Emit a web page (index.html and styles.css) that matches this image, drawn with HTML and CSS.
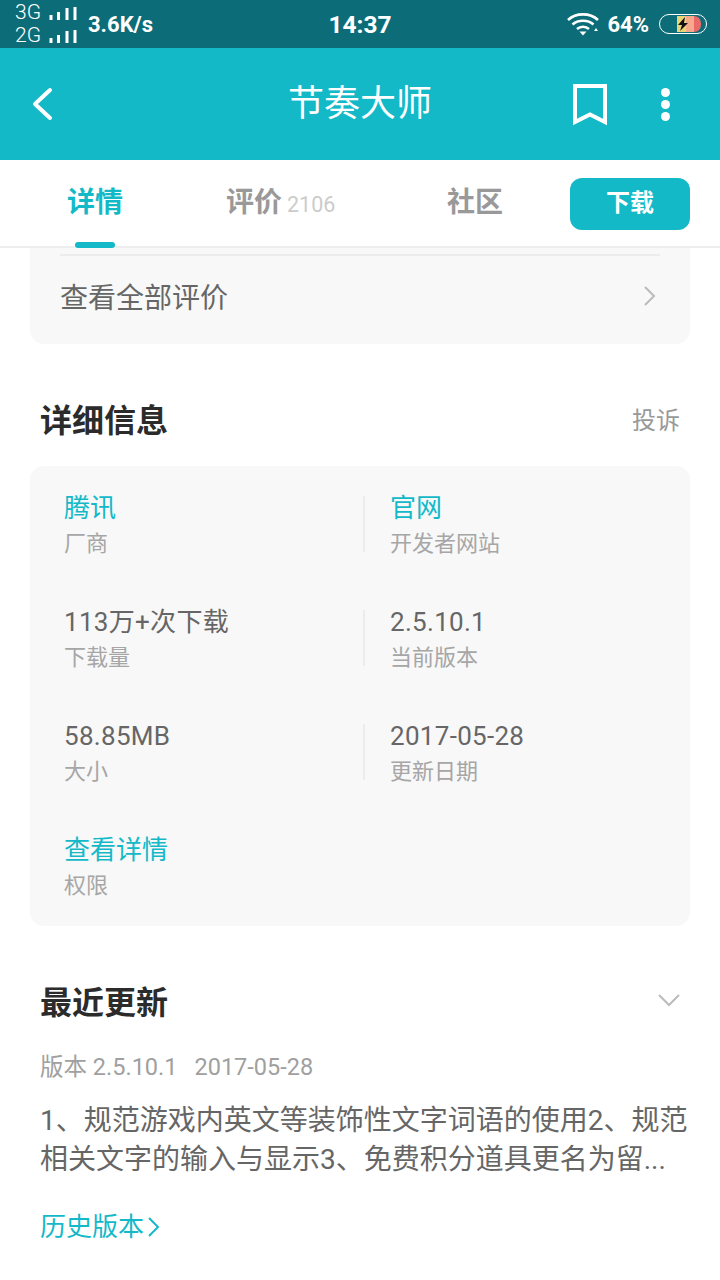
FILE: index.html
```html
<!DOCTYPE html>
<html lang="zh-CN">
  <head>
    <meta charset="utf-8">
    <meta name="viewport" content="width=device-width">
    <title>节奏大师</title>
    <link rel="stylesheet" href="styles.css">
  </head>

  <body>
    <div class="status">
      <div class="signals">
        <div class="signal">3G<svg width="28" height="14" viewBox="0 0 28 14"><path d="M2 9v5M9.500 6v8M18 2v12M26 1v13" stroke="#fff" stroke-width="3"/></svg></div>
        <div class="signal">2G<svg width="28" height="14" viewBox="0 0 28 14"><path d="M2 9v5M9.500 6v8M18 2v12M26 1v13" stroke="#fff" stroke-width="3"/></svg></div>
      </div>
      <span class="speed">3.6K/s</span>
      <span class="clock">14:37</span>
      <div class="status-right">
        <svg width="34" height="24" viewBox="0 0 34 24" fill="none" stroke="#fff" stroke-width="2.6">
          <path d="M1 8C9 .5 23 .5 31 8"/>
          <path d="M5.500 12.500C11 7.500 21 7.500 26.500 12.500"/>
          <path d="M10 17C13.500 14 18.500 14 22 17"/>
          <path d="M12.500 19.500h7L16 23.500z" fill="#fff" stroke="none"/>
          <path d="M27 19h4l-2-3z" fill="#fff" stroke="none"/>
        </svg>
        <span class="percent">64%</span>
        <div class="battery">
          <div class="battery-fill"></div>
          <svg class="bolt" width="12" height="14" viewBox="0 0 12 14"><path d="M8 0L1 8h4L3 14l8-8H7z" fill="#111"/></svg>
        </div>
      </div>
    </div>

    <div class="titlebar">
      <svg class="back" width="24" height="36" viewBox="0 0 24 36" fill="none"><path d="M19 4L4 18l15 14" stroke="#fff" stroke-width="4" stroke-linecap="round" stroke-linejoin="round"/></svg>
      <h1>节奏大师</h1>
      <svg class="bookmark" width="38" height="44" viewBox="0 0 38 44" fill="none"><path d="M3 3h30v36l-15-7.500L3 39z" stroke="#fff" stroke-width="4"/></svg>
      <div class="more"><i></i><i></i><i></i></div>
    </div>

    <div class="tabs">
      <div class="tab tab-on">详情</div>
      <div class="tab tab-review">评价 <span class="count">2106</span></div>
      <div class="tab tab-community">社区</div>
      <div class="download">下载</div>
    </div>

    <div class="review-card">
      <div class="review-link">
        <span>查看全部评价</span>
        <svg width="14" height="22" viewBox="0 0 14 22" fill="none"><path d="M2 2l9 9-9 9" stroke="#bbb" stroke-width="2"/></svg>
      </div>
    </div>

    <div class="section-head info-head">
      <h2>详细信息</h2>
      <span class="report">投诉</span>
    </div>

    <div class="info-card">
      <div class="info-row">
        <div class="info-cell"><div class="value link">腾讯</div><div class="label">厂商</div></div>
        <div class="info-cell"><div class="value link">官网</div><div class="label">开发者网站</div></div>
      </div>
      <div class="info-row">
        <div class="info-cell"><div class="value">113万+次下载</div><div class="label">下载量</div></div>
        <div class="info-cell"><div class="value">2.5.10.1</div><div class="label">当前版本</div></div>
      </div>
      <div class="info-row">
        <div class="info-cell"><div class="value">58.85MB</div><div class="label">大小</div></div>
        <div class="info-cell"><div class="value">2017-05-28</div><div class="label">更新日期</div></div>
      </div>
      <div class="info-row">
        <div class="info-cell no-line"><div class="value link">查看详情</div><div class="label">权限</div></div>
      </div>
    </div>

    <div class="section-head update-head">
      <h2>最近更新</h2>
      <svg width="24" height="14" viewBox="0 0 24 14" fill="none"><path d="M2 2l10 10L22 2" stroke="#bbb" stroke-width="2"/></svg>
    </div>

    <div class="version"><span>版本 2.5.10.1</span><span>2017-05-28</span></div>
    <p class="notes">1、规范游戏内英文等装饰性文字词语的使用2、规范相关文字的输入与显示3、免费积分道具更名为留...</p>
    <div class="history">历史版本<svg width="14" height="22" viewBox="0 0 14 22" fill="none"><path d="M2 2l9 9-9 9" stroke="#14b9c8" stroke-width="2"/></svg></div>
  </body>
</html>
```

FILE: styles.css
```css
* {
  box-sizing: border-box;
}

body {
  margin: 0;
  background: #fff;
  color: #666;
  font-family: Roboto, "Noto Sans CJK SC", sans-serif;
  height: 1280px;
  overflow: hidden;
}

h1, h2, p {
  margin: 0;
  font-weight: normal;
}

/* status bar */
.status {
  position: relative;
  display: flex;
  align-items: center;
  height: 48px;
  padding-left: 15px;
  background: #0c6d78;
  color: #fff;
}

.signals {
  width: 62px;
  margin-right: 11px;
}

.signal {
  display: flex;
  align-items: center;
  justify-content: space-between;
  height: 23px;
  font-size: 21px;
  font-weight: 300;
  line-height: 23px;
}

.speed {
  font-size: 22px;
  font-weight: 700;
}

.clock {
  position: absolute;
  left: 0;
  right: 0;
  top: 9px;
  text-align: center;
  font-size: 24.500px;
  line-height: 32px;
  font-weight: 700;
}

.status-right {
  display: flex;
  align-items: center;
  margin-left: auto;
  padding-right: 13px;
}

.percent {
  margin: 0 10px 0 6px;
  font-size: 22px;
  font-weight: 700;
}

.battery {
  position: relative;
  width: 48px;
  height: 20px;
  border: 1.500px solid #fff;
  border-radius: 10px;
  overflow: hidden;
}

.battery-fill {
  position: absolute;
  top: 1px;
  bottom: 1px;
  left: 17px;
  width: 24px;
  border-radius: 0 7px 7px 0;
  background: linear-gradient(90deg, #e9d477 0 37%, #f7a98c 37% 71%, #ea6a6a 71%);
}

.bolt {
  position: absolute;
  left: 17px;
  top: 1.500px;
}

/* title */
.titlebar {
  position: relative;
  display: flex;
  align-items: center;
  justify-content: center;
  height: 112px;
  background: #14b9c8;
}

.titlebar h1 {
  color: #fff;
  font-size: 36px;
  margin-top: -8px;
}

.back {
  position: absolute;
  left: 31px;
  top: 38px;
}

.bookmark {
  position: absolute;
  left: 572px;
  top: 35px;
}

.more {
  position: absolute;
  left: 661px;
  top: 40px;
  display: flex;
  flex-direction: column;
  gap: 3px;
}

.more i {
  display: block;
  width: 9px;
  height: 9px;
  border-radius: 50%;
  background: #fff;
}

/* tabs */
.tabs {
  position: relative;
  display: flex;
  align-items: center;
  height: 88px;
  border-bottom: 2px solid #eee;
  font-size: 28px;
  font-weight: 700;
  color: #999;
}

.tab {
  position: absolute;
  top: 23px;
  line-height: 40px;
}

.tab-on {
  left: 67px;
  color: #14b9c8;
}

.tab-on::after {
  content: "";
  position: absolute;
  left: 8px;
  top: 59px;
  width: 40px;
  height: 6px;
  border-radius: 3px;
  background: #14b9c8;
}

.tab-review {
  left: 226px;
}

.count {
  margin-left: -2px;
  font-size: 21.500px;
  font-weight: 400;
  color: #ccc;
}

.tab-community {
  left: 447px;
}

.download {
  position: absolute;
  left: 570px;
  top: 18px;
  width: 120px;
  height: 52px;
  border-radius: 12px;
  background: #14b9c8;
  color: #fff;
  font-size: 24px;
  line-height: 50px;
  text-align: center;
}

/* cards */
.review-card {
  margin: 0 30px;
  padding: 6px 30px 0;
  height: 96px;
  background: #f8f8f8;
  border-radius: 0 0 14px 14px;
}

.review-link {
  display: flex;
  align-items: center;
  justify-content: space-between;
  height: 82px;
  border-top: 2px solid #ececec;
  font-size: 28px;
}

.review-link svg {
  margin-right: 3px;
}

.section-head {
  display: flex;
  align-items: center;
  justify-content: space-between;
  padding: 0 40px;
}

.section-head h2 {
  color: #2b2b2b;
  font-size: 32px;
  font-weight: 700;
}

.info-head {
  height: 122px;
  padding-top: 26px;
}

.report {
  font-size: 24px;
  color: #999;
}

.info-card {
  margin: 0 30px;
  height: 460px;
  padding-top: 22px;
  background: #f8f8f8;
  border-radius: 14px;
}

.info-row {
  display: flex;
  height: 114px;
}

.info-cell {
  flex: none;
  width: 326px;
  padding-left: 34px;
  height: 88px;
}

.info-cell:first-child {
  position: relative;
  width: 334px;
}

.info-cell:first-child::after {
  content: "";
  position: absolute;
  right: -1px;
  top: 8px;
  width: 2px;
  height: 56px;
  background: #ececec;
}

.info-cell.no-line::after {
  display: none;
}

.info-cell:nth-child(2) {
  padding-left: 26px;
}

.value {
  font-size: 26px;
  line-height: 40px;
  letter-spacing: .3px;
  color: #666;
}

.value.link {
  letter-spacing: 0;
  color: #14b9c8;
}

.label {
  font-size: 22px;
  line-height: 32px;
  color: #a6a6a6;
}

.update-head {
  height: 152px;
  padding-bottom: 4px;
}

.update-head svg {
  margin-right: -1px;
}

.version {
  display: flex;
  gap: 17px;
  padding-left: 40px;
  margin-top: -28px;
  font-size: 23.500px;
  line-height: 34px;
  color: #a0a0a0;
}

.notes {
  margin: 17px 30px 0 40px;
  font-size: 28px;
  line-height: 39px;
  color: #666;
  height: 78px;
  overflow: hidden;
}

.history {
  display: flex;
  align-items: center;
  gap: 3px;
  margin: 28px 0 0 40px;
  font-size: 26px;
  line-height: 40px;
  color: #14b9c8;
}
```
